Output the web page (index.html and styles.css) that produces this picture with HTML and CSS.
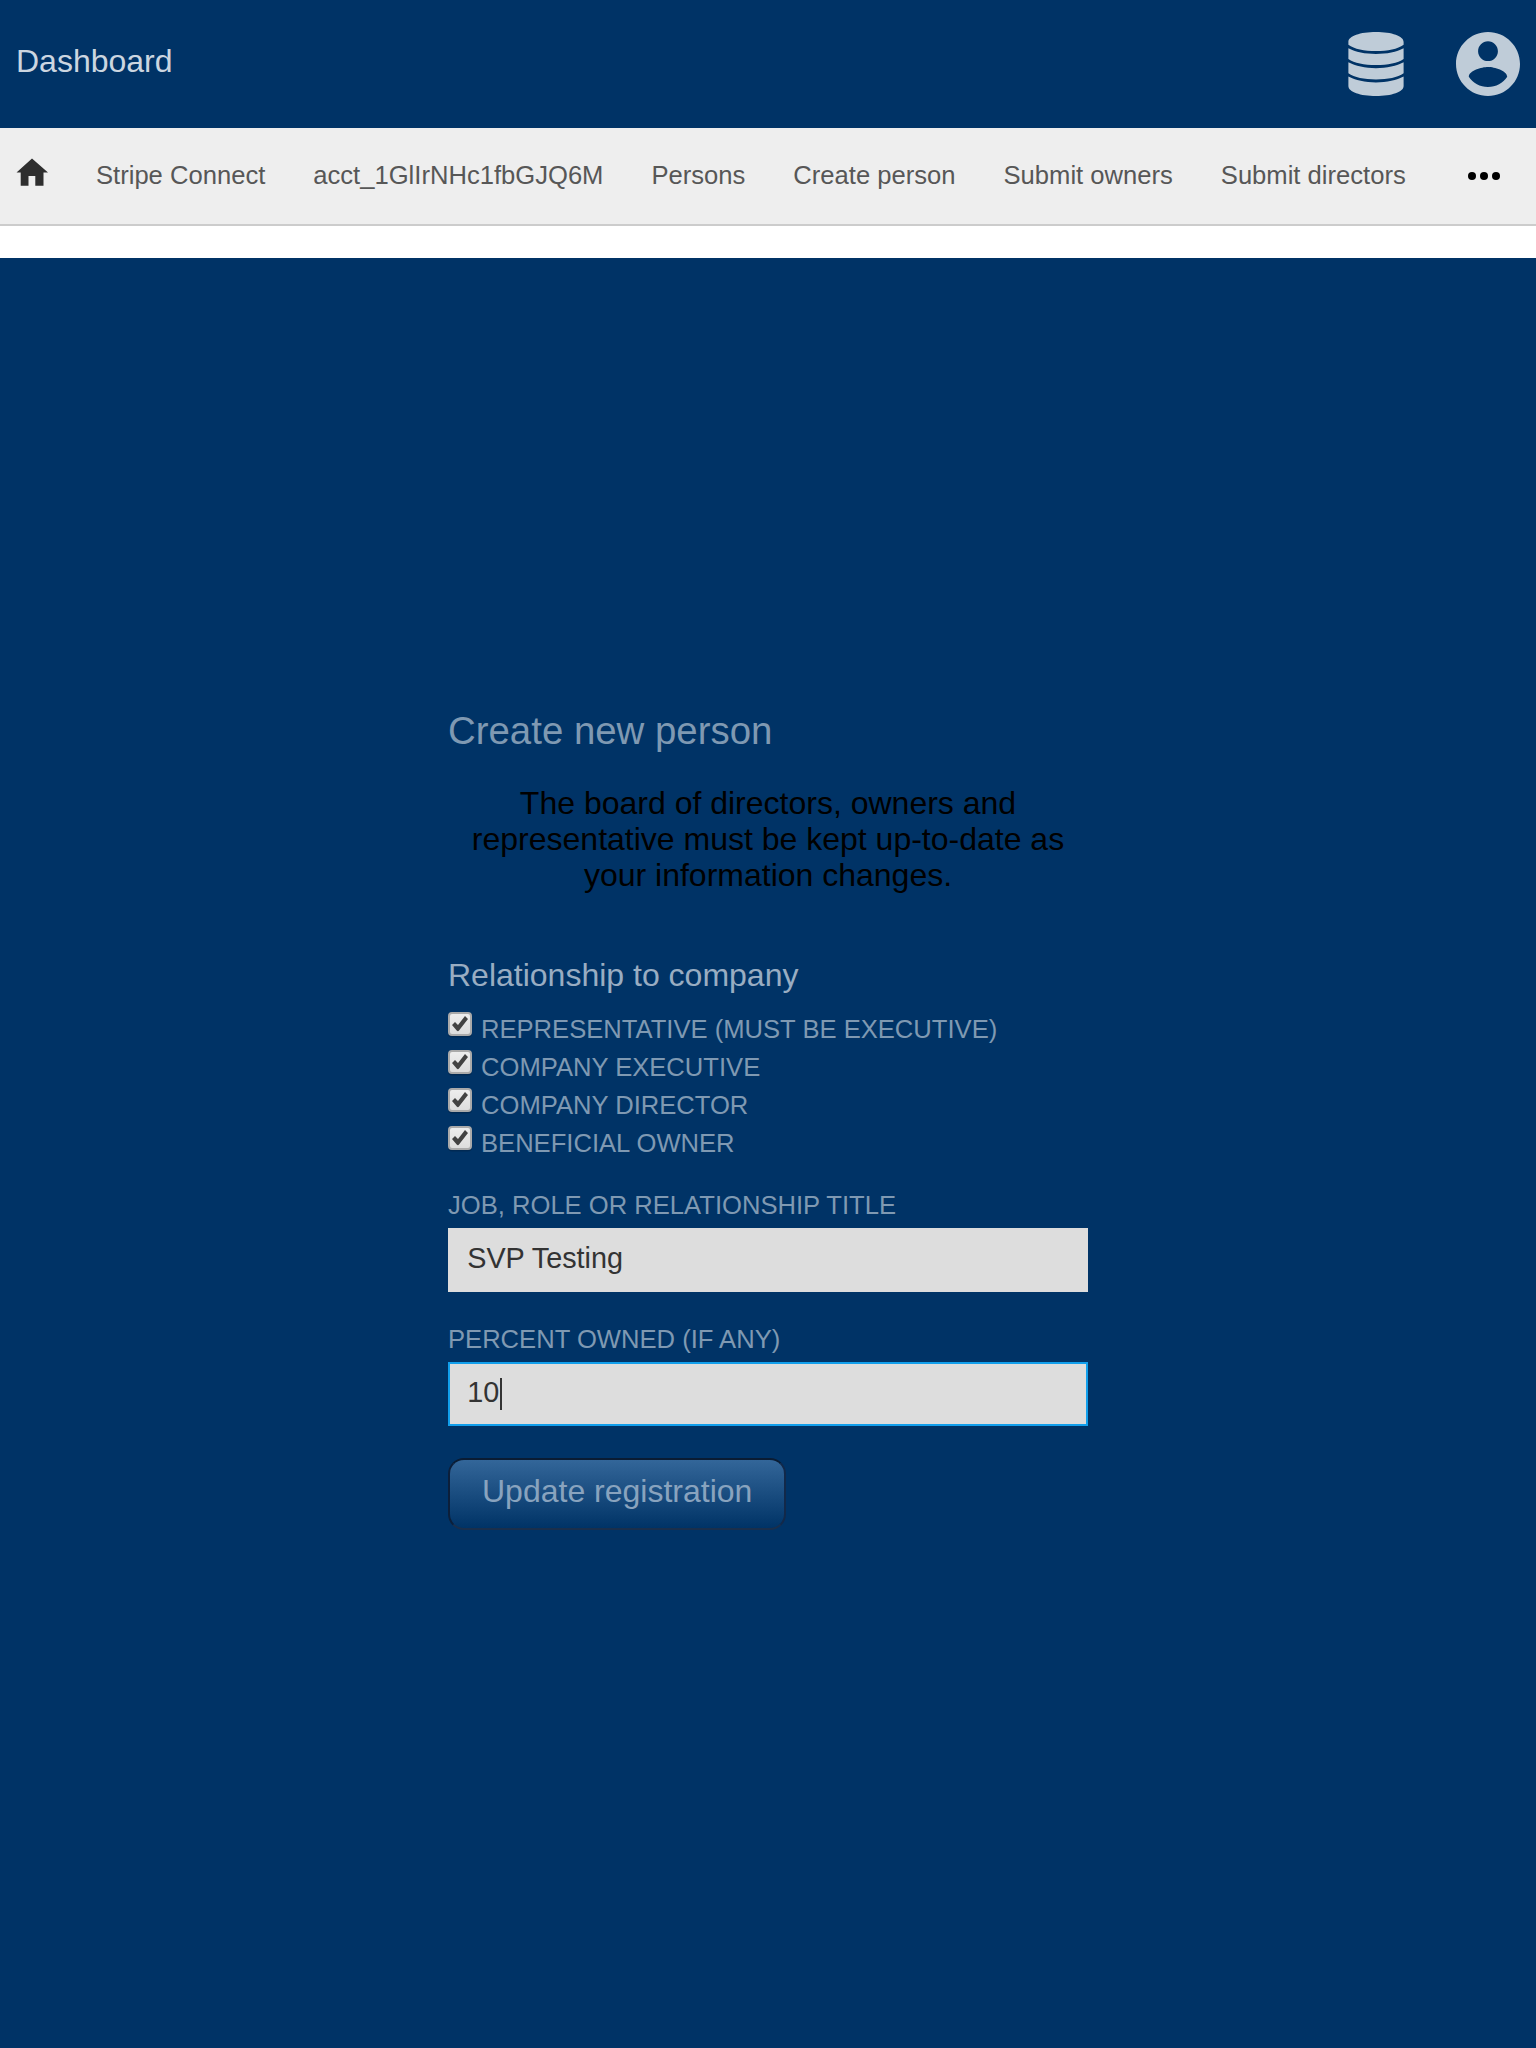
FILE: index.html
```html
<!DOCTYPE html>
<html lang="en">
<head>
<meta charset="utf-8">
<title>Dashboard</title>
<link rel="stylesheet" href="styles.css">
</head>
<body>
<header class="header">
  <h1 class="brand">Dashboard</h1>
  <div class="header-icons">
    <svg class="icon-db" viewBox="-.4 0 56.8 64" preserveAspectRatio="none"><path d="M0 10C0 4 12 0 28 0S56 4 56 10V12.7C50 17 40 19 28 19S6 17 0 12.7ZM0 16.3C7 20 17 22 28 22S49 20 56 16.3V27C50 31 40 33 28 33S6 31 0 27ZM0 30.3C7 34 17 36.2 28 36.2S49 34 56 30.3V41.2C50 45.3 40 47.4 28 47.4S6 45.3 0 41.2ZM0 44.6C7 48.4 17 50.4 28 50.4S49 48.4 56 44.6V54C56 60 44 64 28 64S0 60 0 54Z"/></svg>
    <svg class="icon-user" viewBox="2 2 20 20"><path d="M12 2C6.48 2 2 6.48 2 12s4.480 10 10 10 10-4.480 10-10S17.520 2 12 2zm0 2.900c1.710 0 3.100 1.390 3.100 3.100s-1.390 3.100-3.100 3.100-3.100-1.390-3.100-3.100 1.390-3.100 3.100-3.100zm0 14.300c-2.500 0-4.710-1.280-6-3.220.03-1.990 4-3.080 6-3.080 1.990 0 5.970 1.090 6 3.080-1.290 1.940-3.500 3.220-6 3.220z"/></svg>
  </div>
</header>
<nav class="nav">
  <svg class="icon-home" viewBox="0 0 32 28"><path d="M16 .5 32 14.500H27.500V27.700H19.300V18H12.500V27.700H4.700V14.500H.5Z"/></svg>
  <a>Stripe Connect</a>
  <a>acct_1GlIrNHc1fbGJQ6M</a>
  <a>Persons</a>
  <a>Create person</a>
  <a>Submit owners</a>
  <a>Submit directors</a>
  <svg class="icon-more" viewBox="0 0 32 8"><circle cx="4" cy="4" r="4"/><circle cx="16" cy="4" r="4"/><circle cx="28" cy="4" r="4"/></svg>
</nav>
<main class="main">
  <form class="form">
    <h2 class="title">Create new person</h2>
    <p class="note">The board of directors, owners and representative must be kept up-to-date as your information changes.</p>
    <h3 class="legend">Relationship to company</h3>
    <label class="check"><svg class="box" viewBox="0 0 24 26"><use href="#checked"/></svg>Representative (must be executive)</label>
    <label class="check"><svg class="box" viewBox="0 0 24 26"><use href="#checked"/></svg>Company executive</label>
    <label class="check"><svg class="box" viewBox="0 0 24 26"><use href="#checked"/></svg>Company director</label>
    <label class="check"><svg class="box" viewBox="0 0 24 26"><use href="#checked"/></svg>Beneficial owner</label>
    <label class="label">Job, role or relationship title</label>
    <div class="input" role="textbox">SVP Testing</div>
    <label class="label">Percent owned (if any)</label>
    <div class="input focused" role="textbox">10<span class="caret"></span></div>
    <button class="submit" type="button">Update registration</button>
  </form>
</main>
<svg class="defs">
  <defs>
    <linearGradient id="face" x1="0" y1="0" x2="0" y2="1"><stop offset="0" stop-color="#eee"/><stop offset="1" stop-color="#dcdcdc"/></linearGradient>
    <g id="checked">
      <rect y="1.500" width="24" height="24" rx="4" fill="#000" opacity=".18"/>
      <rect x="1" y="1" width="22" height="22" rx="3" fill="url(#face)" stroke="#aaa" stroke-width="2"/>
      <path d="M4 13 7 10 10 13 17 4 20 7 11 18.500Q10 20 8.700 18.500Z" fill="#424242"/>
    </g>
  </defs>
</svg>
</body>
</html>
```
FILE: styles.css
```css
* { box-sizing: border-box; }
body {
  margin: 0;
  height: 2048px;
  display: flex;
  flex-direction: column;
  background: #fff;
  font-family: "Liberation Sans", Arial, sans-serif;
  font-size: 32px;
  overflow: hidden;
}
h1, h2, h3, p { margin: 0; font-weight: normal; }
svg { flex: none; display: block; }
.defs { position: absolute; width: 0; height: 0; }

.header {
  height: 128px;
  padding: 0 16px;
  display: flex;
  justify-content: space-between;
  align-items: center;
  background: #036;
}
.brand { font-size: 32px; line-height: 36px; padding-bottom: 6px; color: #ccd6e0; }
.header-icons { display: flex; gap: 52px; fill: #bfccd8; }
.icon-db { width: 56px; height: 64px; }
.icon-user { width: 64px; height: 64px; }

.nav {
  height: 98px;
  padding: 0 36px 0 16px;
  display: flex;
  align-items: center;
  gap: 48px;
  background: #eee;
  border-bottom: 2px solid #ccc;
  font-size: 25.6px;
  line-height: 30px;
  color: #575757;
  white-space: nowrap;
}
.nav a { padding-bottom: 2px; }
.icon-home { width: 32px; height: 28px; margin-bottom: 8px; fill: #2e2e2e; }
.icon-more { width: 32px; height: 8px; margin-left: auto; }

.main {
  flex: 1;
  margin-top: 32px;
  padding-top: 451px;
  background: #036;
}
.form { width: 640px; margin: 0 auto; }
.title { font-size: 38.4px; line-height: 44px; color: #7f99b2; }
.note { margin-top: 32px; line-height: 36px; text-align: center; color: #000; }
.legend { margin: 64px 0 17px; font-size: 32px; line-height: 36px; color: #99adc2; }
.check {
  display: flex;
  gap: 9px;
  height: 38px;
  font-size: 25.6px;
  line-height: 38px;
  text-transform: uppercase;
  color: #7f99b2;
}
.box { width: 24px; height: 26px; margin-top: 2px; }
.label {
  display: block;
  margin-top: 32px;
  font-size: 25.6px;
  line-height: 30px;
  text-transform: uppercase;
  color: #7f99b2;
}
.check + .label { margin-top: 28px; }
.input {
  display: flex;
  align-items: center;
  height: 64px;
  margin-top: 8px;
  padding: 0 17.2px 4px;
  border: 2px solid #ddd;
  background: #ddd;
  font-size: 28.8px;
  line-height: 32px;
  color: #333;
}
.input.focused { border-color: #119fec; }
.caret { width: 2px; height: 32px; margin: 4px 0 0 .8px; background: #333; }
.submit {
  display: block;
  height: 72px;
  margin-top: 32px;
  padding: 0 32px 6px;
  border: 2px solid;
  border-color: #0a1c33 #12294a #1a2f4c #0c1f3a;
  border-radius: 16px;
  background: linear-gradient(#369, #036);
  font: 32px/36px "Liberation Sans", Arial, sans-serif;
  color: #89a3be;
}
```
